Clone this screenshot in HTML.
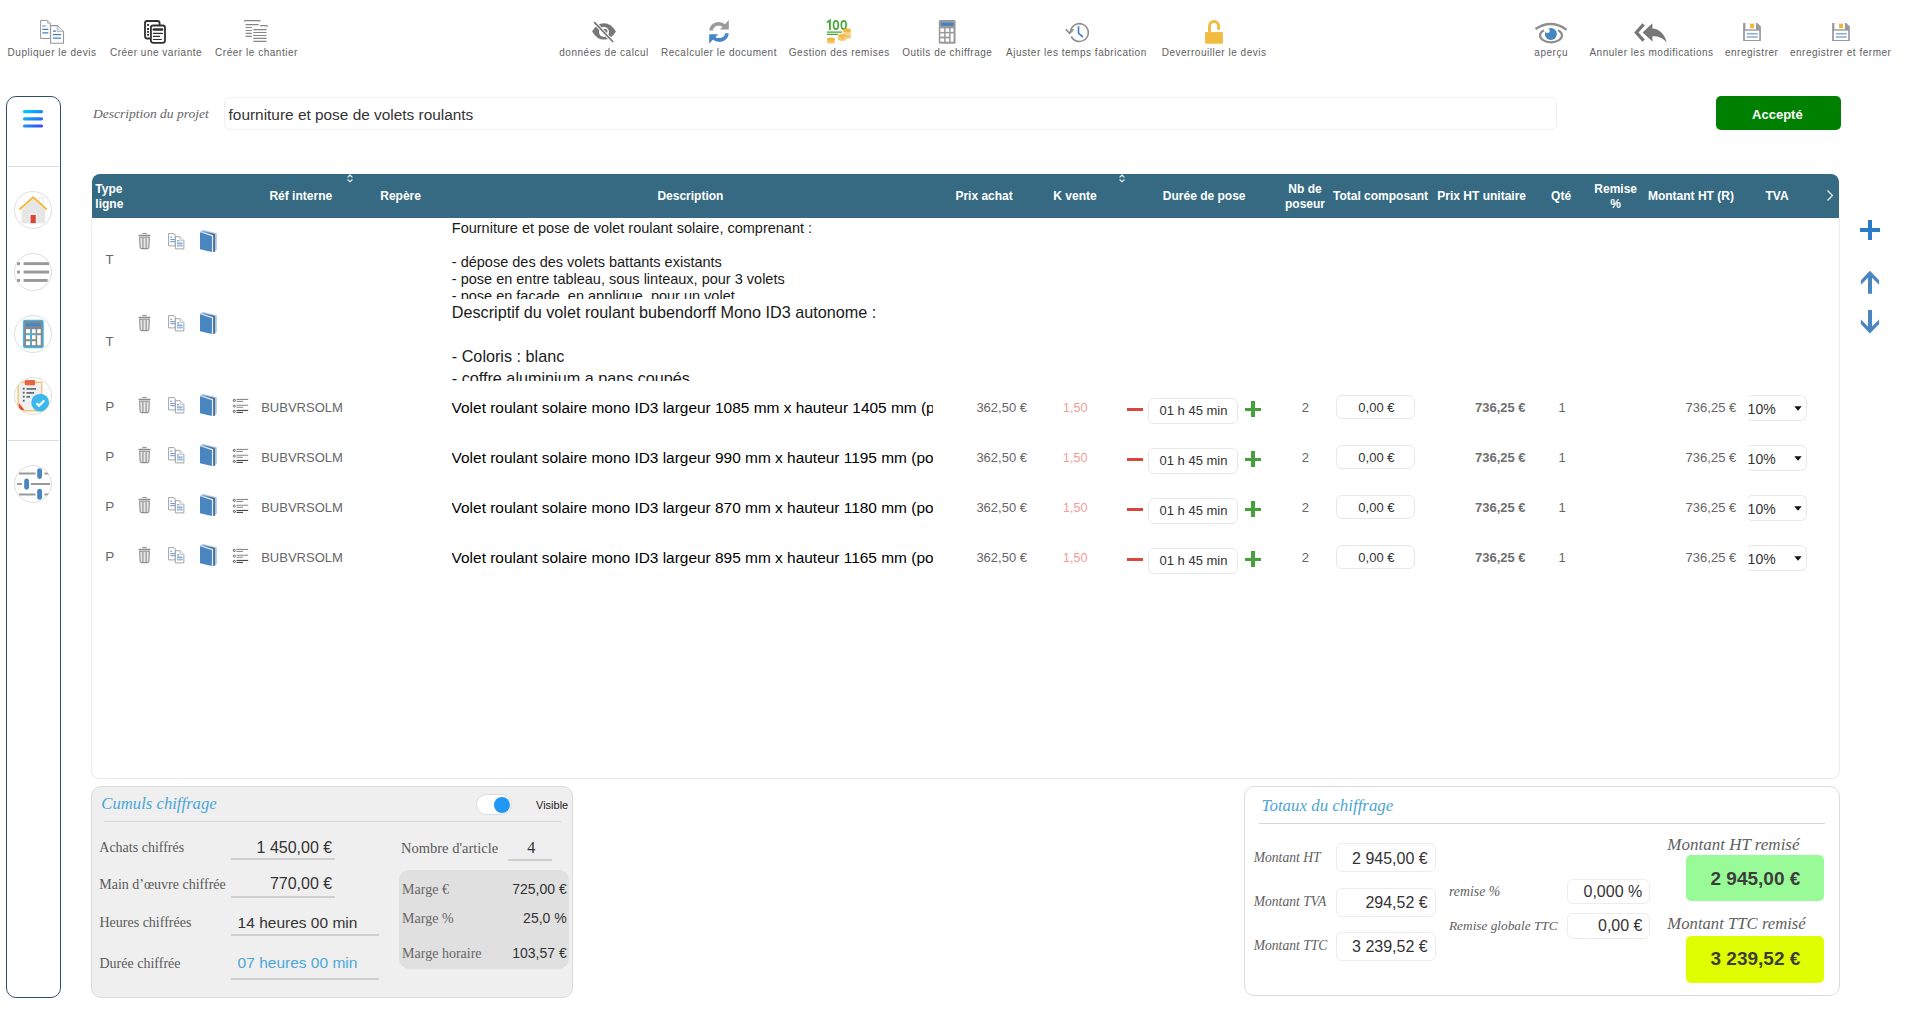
<!DOCTYPE html>
<html><head><meta charset="utf-8"><style>
*{box-sizing:border-box;margin:0;padding:0}
html,body{width:1909px;height:1017px;overflow:hidden;background:#fff;font-family:"Liberation Sans",sans-serif;position:relative}
.a{position:absolute}
.nw{white-space:nowrap}
.lbl{position:absolute;top:45.5px;font-size:10px;letter-spacing:0.52px;color:#606060;white-space:nowrap;transform:translateX(-50%);line-height:13px}
#side{left:6px;top:96px;width:55.2px;height:902px;border:1.5px solid #2f5166;border-radius:10px}
.circ{position:absolute;left:14px;width:38px;height:38px;border-radius:50%;border:1px solid #dedede;background:#fff;overflow:hidden}
#thead{left:92px;top:174px;width:1747px;height:44px;background:#366a82;border-radius:8px 8px 0 0}
.th{position:absolute;color:#fff;font-weight:bold;font-size:12px;line-height:14.5px;white-space:nowrap;transform:translateX(-50%);text-align:center}
#tbody{left:91px;top:218px;width:1749px;height:561px;border:1px solid #ededed;border-top:none;border-radius:0 0 8px 8px}
.serif{font-family:"Liberation Serif",serif}
.box{position:absolute;border:1px solid #e8e8e8;border-radius:6px;background:#fff}
</style></head><body>
<span class="lbl" style="left:52px">Dupliquer le devis</span>
<span class="lbl" style="left:156px">Créer une variante</span>
<span class="lbl" style="left:256.5px">Créer le chantier</span>
<span class="lbl" style="left:604px">données de calcul</span>
<span class="lbl" style="left:719px">Recalculer le document</span>
<span class="lbl" style="left:839.3px">Gestion des remises</span>
<span class="lbl" style="left:947.3px">Outils de chiffrage</span>
<span class="lbl" style="left:1076.4px">Ajuster les temps fabrication</span>
<span class="lbl" style="left:1214.1px">Deverrouiller le devis</span>
<span class="lbl" style="left:1551.2px">aperçu</span>
<span class="lbl" style="left:1651.5px">Annuler les modifications</span>
<span class="lbl" style="left:1751.7px">enregistrer</span>
<span class="lbl" style="left:1840.7px">enregistrer et fermer</span>
<svg class="a" style="left:38px;top:18px" width="28" height="28" viewBox="38 18 28 28"><path d="M40.6 20.4H47.6L50.4 23.3V38.5H40.6Z" fill="#fff" stroke="#999" stroke-width="1"/><path d="M47.6 20.4V23.3H50.4" fill="#d8d8d8" stroke="#aaa" stroke-width="0.8"/><path d="M42.4 26H45.8M42.4 29.4H48.4M42.4 32.9H48.4" stroke="#3f80c4" stroke-width="1.1"/><path d="M50.6 25.6H57.2L63.5 31.6V43.3H50.6Z" fill="#fff" stroke="#999" stroke-width="1.1"/><path d="M57.2 25.6V31.6H63.5" fill="#e4e4e4" stroke="#aaa" stroke-width="0.8"/><path d="M53 31.1H55.9M53 34.6H61.1M53 38.1H61.1" stroke="#3f80c4" stroke-width="1.2"/></svg>
<svg class="a" style="left:142px;top:18px" width="26" height="28" viewBox="142 18 26 28"><rect x="145" y="21" width="14.6" height="17.5" rx="2.2" fill="#fff" stroke="#303030" stroke-width="1.8"/><path d="M148 24.8h0.1M148 29h0.1M148 31.9h0.1M148 34.9h0.1" stroke="#303030" stroke-width="1.8" stroke-linecap="square"/><rect x="150.9" y="25.5" width="14.1" height="17.3" rx="2.2" fill="#fff" stroke="#303030" stroke-width="1.8"/><path d="M153.8 29.6h8.3" stroke="#303030" stroke-width="2.5" stroke-linecap="round"/><path d="M153.4 33.4h9M153.4 36.4h6.2M153.4 39.5h8" stroke="#303030" stroke-width="1.2" stroke-linecap="round"/></svg>
<svg class="a" style="left:242px;top:18px" width="28" height="26" viewBox="242 18 28 26"><g stroke="#7a7a7a" stroke-width="1.2" fill="none" opacity="0.9"><path d="M244.3 21.5Q244.6 20.7 245.5 20.7H259.2Q260.2 20.7 260.4 21.4"/><path d="M245.6 24.6h13M245.6 27.5h6.2M245.6 30.5h6.2M245.6 33.4h6.2M245.6 36.4h6.2"/><path d="M260.2 25.7H266.2Q267.4 25.7 267.6 26.8"/><path d="M253.3 29.6h13.2M253.3 32.5h13.2M253.3 35.5h13.2M253.3 38.4h13.2M253.3 41.4h13.2"/></g></svg>
<svg class="a" style="left:588px;top:16px" width="32" height="30" viewBox="588 16 32 30"><path d="M592.1 31.4Q597 23.2 604 23.2Q611 23.2 615.9 31.4Q611 39.6 604 39.6Q597 39.6 592.1 31.4Z" fill="#777"/><circle cx="604" cy="32" r="5" fill="#fff"/><circle cx="604.8" cy="31.3" r="2.6" fill="#777"/><path d="M594.2 22.2L613.1 42" stroke="#fff" stroke-width="3.6"/><path d="M594.2 22.2L613.1 42" stroke="#777" stroke-width="1.8"/></svg>
<svg class="a" style="left:704px;top:16px" width="30" height="30" viewBox="704 16 30 30"><path d="M709.3 30.5C709.6 25.5 713.5 21.9 718.7 21.9C721.2 21.9 723.4 22.9 725 24.2L728.8 20.1V29.6H719.9L722.6 26.9C721.6 26.1 720.2 25.7 718.7 25.7C715.5 25.7 713.1 27.8 712.8 30.5Z" fill="#9a9a9a"/><path d="M728.7 33.3C728.4 38.3 724.5 41.9 719.3 41.9C716.8 41.9 714.6 40.9 713 39.6L709.2 43.7V34.2H718.1L715.4 36.9C716.4 37.7 717.8 38.1 719.3 38.1C722.5 38.1 724.9 36 725.2 33.3Z" fill="#4686c6"/></svg>
<svg class="a" style="left:822px;top:16px" width="34" height="30" viewBox="822 16 34 30"><g fill="none" stroke="#46a83a"><path d="M827 22.6L829.9 20.5V29.9" stroke-width="1.9"/><ellipse cx="835.9" cy="25" rx="2.35" ry="4.1" stroke-width="1.7"/><ellipse cx="843.7" cy="25" rx="2.35" ry="4.1" stroke-width="1.7"/><path d="M827 32.1H842M827 34.3H837.9" stroke-width="1.3"/></g><g><rect x="843.2" y="30.2" width="7.7" height="7" fill="#f6d48c"/><ellipse cx="847" cy="37" rx="3.85" ry="1.7" fill="#f3c667"/><ellipse cx="847" cy="30.2" rx="3.85" ry="2" fill="#f2b83f"/><rect x="838.2" y="35.8" width="7.7" height="3.6" fill="#f6d48c"/><ellipse cx="842" cy="39.2" rx="3.85" ry="1.6" fill="#f3c667"/><ellipse cx="842" cy="35.8" rx="3.85" ry="1.8" fill="#f2b83f"/><rect x="827" y="39.3" width="8" height="2.8" fill="#f6d48c"/><ellipse cx="831" cy="42" rx="4" ry="1.6" fill="#f3c667"/><ellipse cx="831" cy="39.3" rx="4" ry="1.8" fill="#f2b83f"/></g></svg>
<svg class="a" style="left:932px;top:16px" width="30" height="30" viewBox="932 16 30 30"><rect x="938.8" y="20.1" width="16.8" height="23.6" rx="1.5" fill="#9a9a9a"/><rect x="940.8" y="22.8" width="12.7" height="2.9" rx="0.8" fill="#3f80c6"/><g fill="#fff"><rect x="940.3" y="28.4" width="3.8" height="3.5"/><rect x="945.6" y="28.4" width="3.5" height="3.5"/><rect x="950.6" y="28.4" width="2.9" height="3.5"/><rect x="940.3" y="33.4" width="3.8" height="3.2"/><rect x="945.6" y="33.4" width="3.5" height="3.2"/><rect x="950.6" y="33.4" width="2.9" height="8.3"/><rect x="940.3" y="38.4" width="3.8" height="3.3"/><rect x="945.6" y="38.4" width="3.5" height="3.3"/></g></svg>
<svg class="a" style="left:1062px;top:16px" width="30" height="30" viewBox="1062 16 30 30"><path d="M1070.5 32.5A8.9 8.9 0 1 1 1071.3 36.3" fill="none" stroke="#8c8c8c" stroke-width="1.6"/><path d="M1065.8 29.3L1069.6 33.3L1073.5 29.3" fill="none" stroke="#8c8c8c" stroke-width="1.6"/><path d="M1078.5 26.3V33.1L1082.9 37.2" fill="none" stroke="#3a7ec0" stroke-width="1.6"/></svg>
<svg class="a" style="left:1198px;top:16px" width="32" height="30" viewBox="1198 16 32 30"><path d="M1209.5 32.5V26A4.55 4.55 0 0 1 1218.6 26V29.7" fill="none" stroke="#f0bb3e" stroke-width="2.9"/><rect x="1205.1" y="32.1" width="17.8" height="11.6" fill="#f0bb3e"/></svg>
<svg class="a" style="left:1532px;top:18px" width="38" height="30" viewBox="1532 18 38 30"><path d="M1535.5 29Q1551 18.6 1566.5 29.7" fill="none" stroke="#8f8f8f" stroke-width="2.4"/><path d="M1543.9 30.3A11 6.8 0 1 0 1558.1 30.3" fill="none" stroke="#8f8f8f" stroke-width="2.2"/><circle cx="1550.9" cy="33.9" r="6" fill="#4787c0"/><circle cx="1547.4" cy="30.8" r="2.3" fill="#fff"/></svg>
<svg class="a" style="left:1632px;top:18px" width="38" height="30" viewBox="1632 18 38 30"><path d="M1643.6 24.4L1636.4 32.5L1643.6 40.6" fill="none" stroke="#777" stroke-width="3.3"/><path d="M1642.6 32.5L1652.4 23.3V28.6C1659 28.9 1664.5 33.5 1666.8 42.5C1663 38 1658.5 36.2 1652.4 36.3V41.5Z" fill="#777"/></svg>
<svg class="a" style="left:1738px;top:18px" width="28" height="28" viewBox="1738 18 28 28"><path d="M1743.1 23.1H1757.3L1760.9 26.4V40.9H1743.1Z" fill="#9a9a9a"/><rect x="1745.4" y="23.1" width="10.5" height="6.2" fill="#fff"/><rect x="1750.1" y="23.8" width="3.9" height="4.4" fill="#f0b73a"/><rect x="1744.9" y="30.7" width="14.3" height="9.3" fill="#fff"/><path d="M1746.8 33.7H1757.8M1746.8 37H1757.8" stroke="#85acd3" stroke-width="1.4"/></svg>
<svg class="a" style="left:1826.9px;top:18px" width="28" height="28" viewBox="1826.9 18 28 28"><path d="M1832.0 23.1H1846.2L1849.8000000000002 26.4V40.9H1832.0Z" fill="#9a9a9a"/><rect x="1834.3000000000002" y="23.1" width="10.5" height="6.2" fill="#fff"/><rect x="1839.0" y="23.8" width="3.9" height="4.4" fill="#f0b73a"/><rect x="1833.8000000000002" y="30.7" width="14.3" height="9.3" fill="#fff"/><path d="M1835.7 33.7H1846.7M1835.7 37H1846.7" stroke="#85acd3" stroke-width="1.4"/></svg>
<div id="side" class="a"></div>
<svg class="a" style="left:22px;top:109px" width="23" height="20" viewBox="0 0 23 20"><defs><linearGradient id="hg" x1="0" y1="0" x2="1" y2="1"><stop offset="0" stop-color="#00c8ff"/><stop offset="1" stop-color="#3a50f0"/></linearGradient></defs><path d="M2.5 2.6H19.5M2.5 9.8H19.5M2.5 17H19.5" stroke="url(#hg)" stroke-width="3.2" stroke-linecap="round"/></svg>
<div class="a" style="left:8px;top:166px;width:51px;height:1px;background:#dcdcdc"></div>
<div class="a" style="left:8px;top:440px;width:51px;height:1px;background:#dcdcdc"></div>
<div class="circ" style="top:191px"></div><svg class="a" style="left:14px;top:191px" width="38" height="38" viewBox="0 0 38 38"><defs><clipPath id="c210"><circle cx="19" cy="19" r="18.3"/></clipPath></defs><g clip-path="url(#c210)"><path d="M7.5 19V32.2H31V19L19.3 7.8Z" fill="#e6e6e6"/><rect x="24.8" y="7" width="4.5" height="5.8" fill="none" stroke="#e2e2e2" stroke-width="0.9"/><path d="M5.4 18.5L19.3 6.3L32.7 18.5" fill="none" stroke="#f3b93b" stroke-width="2"/><rect x="15.6" y="22.6" width="6.8" height="9.8" fill="#fff"/><rect x="16.5" y="23.9" width="5.3" height="8.3" fill="#d9473b"/></g></svg>
<div class="circ" style="top:253px"></div><svg class="a" style="left:14px;top:253px" width="38" height="38" viewBox="0 0 38 38"><defs><clipPath id="c272"><circle cx="19" cy="19" r="18.3"/></clipPath></defs><g clip-path="url(#c272)"><g fill="#999"><rect x="3" y="9.2" width="3" height="2.9"/><rect x="9.6" y="9.2" width="25.5" height="2.9"/><rect x="3" y="17.6" width="3" height="2.9"/><rect x="9.6" y="17.6" width="25.5" height="2.9"/><rect x="3" y="26" width="3" height="2.9"/><rect x="9.6" y="26" width="24" height="2.9"/></g></g></svg>
<div class="circ" style="top:315px"></div><svg class="a" style="left:14px;top:315px" width="38" height="38" viewBox="0 0 38 38"><defs><clipPath id="c334"><circle cx="19" cy="19" r="18.3"/></clipPath></defs><g clip-path="url(#c334)"><rect x="9.6" y="5.3" width="19.5" height="27.2" rx="1.6" fill="#888" stroke="#3cb8ea" stroke-width="1.3"/><rect x="12" y="8.3" width="14.5" height="3" rx="1" fill="#3d86d4"/><g fill="#fff"><rect x="12" y="14.2" width="4" height="4"/><rect x="18" y="14.2" width="3.6" height="4"/><rect x="23.2" y="14.2" width="3.5" height="4"/><rect x="12" y="20.2" width="4" height="4"/><rect x="18" y="20.2" width="3.6" height="4"/><rect x="23.2" y="20.2" width="3.5" height="10"/><rect x="12" y="26.2" width="4" height="4"/><rect x="18" y="26.2" width="3.6" height="4"/></g><path d="M16.9 14.2V30.2M12 19.2h11" stroke="#3cc8f0" stroke-width="1"/></g></svg>
<div class="circ" style="top:377px"></div><svg class="a" style="left:14px;top:377px" width="38" height="38" viewBox="0 0 38 38"><defs><clipPath id="c396"><circle cx="19" cy="19" r="18.3"/></clipPath></defs><g clip-path="url(#c396)"><rect x="3.4" y="4.5" width="25" height="30" fill="#f6c46f"/><rect x="4.8" y="6" width="22.3" height="27" fill="#efefef"/><rect x="10.8" y="3" width="10.3" height="5.3" rx="1.2" fill="#e8633f"/><path d="M4.8 26L10.5 33H4.8Z" fill="#e84a3a"/><g fill="#4e6670"><rect x="8.8" y="10.8" width="1.8" height="1.8"/><rect x="8.8" y="14.8" width="1.8" height="1.8"/><rect x="8.8" y="18.8" width="1.8" height="1.8"/><rect x="8.8" y="22.8" width="1.8" height="1.8"/><rect x="12.5" y="11.1" width="9.5" height="1.6"/><rect x="12.5" y="15.1" width="7.5" height="1.6"/><rect x="12.5" y="19.1" width="3.5" height="1.6"/></g><circle cx="26.2" cy="25.6" r="8.9" fill="#3cb8ec"/><path d="M22.5 26.2L25 28.6L30.3 23.5" fill="none" stroke="#fff" stroke-width="2.2"/></g></svg>
<div class="circ" style="top:465px"></div><svg class="a" style="left:14px;top:465px" width="38" height="38" viewBox="0 0 38 38"><defs><clipPath id="c484"><circle cx="19" cy="19" r="18.3"/></clipPath></defs><g clip-path="url(#c484)"><path d="M5 8.5H36M3 19.1H36M5 29.4H36" stroke="#999" stroke-width="2"/><g fill="#fff"><rect x="21.5" y="7" width="9" height="3"/><rect x="8" y="17.6" width="9" height="3"/><rect x="21.5" y="27.9" width="9" height="3"/></g><g fill="#4a86c0"><rect x="23.2" y="3.2" width="4.8" height="10.7" rx="2.4"/><rect x="10.2" y="13.5" width="4.8" height="11.2" rx="2.4"/><rect x="23.2" y="23.8" width="4.8" height="11" rx="2.4"/></g></g></svg>
<div class="a nw " style="left:93px;top:106.99px;font-size:13.5px;line-height:1;font-family:'Liberation Serif',serif;color:#666;font-style:italic;">Description du projet</div>
<div class="a" style="left:224px;top:97px;width:1333px;height:33px;border:1px solid #f0f0f0;border-radius:6px"></div>
<div class="a nw " style="left:228.6px;top:107.36px;font-size:15.4px;line-height:1;color:#333;">fourniture et pose de volets roulants</div>
<div class="a" style="left:1715.5px;top:95.5px;width:125px;height:34.6px;background:#008000;border-radius:5px"></div>
<div class="a nw " style="left:1777.4px;transform:translateX(-50%);top:107.70px;font-size:13px;line-height:1;color:#fff;font-weight:bold;">Accepté</div>
<div id="thead" class="a"></div>
<div id="tbody" class="a"></div>
<div class="a nw " style="left:95.3px;top:182.54px;font-size:12px;line-height:1;color:#fff;font-weight:bold;">Type</div>
<div class="a nw " style="left:95.3px;top:198.14px;font-size:12px;line-height:1;color:#fff;font-weight:bold;">ligne</div>
<div class="a nw " style="left:300.8px;transform:translateX(-50%);top:189.84px;font-size:12px;line-height:1;color:#fff;font-weight:bold;">Réf interne</div>
<div class="a nw " style="left:400.6px;transform:translateX(-50%);top:189.84px;font-size:12px;line-height:1;color:#fff;font-weight:bold;">Repère</div>
<div class="a nw " style="left:690.4px;transform:translateX(-50%);top:189.84px;font-size:12px;line-height:1;color:#fff;font-weight:bold;">Description</div>
<div class="a nw " style="left:984.1px;transform:translateX(-50%);top:189.84px;font-size:12px;line-height:1;color:#fff;font-weight:bold;">Prix achat</div>
<div class="a nw " style="left:1075px;transform:translateX(-50%);top:189.84px;font-size:12px;line-height:1;color:#fff;font-weight:bold;">K vente</div>
<div class="a nw " style="left:1204.2px;transform:translateX(-50%);top:189.84px;font-size:12px;line-height:1;color:#fff;font-weight:bold;">Durée de pose</div>
<div class="a nw " style="left:1380.5px;transform:translateX(-50%);top:189.84px;font-size:12px;line-height:1;color:#fff;font-weight:bold;">Total composant</div>
<div class="a nw " style="left:1481.7px;transform:translateX(-50%);top:189.84px;font-size:12px;line-height:1;color:#fff;font-weight:bold;">Prix HT unitaire</div>
<div class="a nw " style="left:1561.1px;transform:translateX(-50%);top:189.84px;font-size:12px;line-height:1;color:#fff;font-weight:bold;">Qté</div>
<div class="a nw " style="left:1690.9px;transform:translateX(-50%);top:189.84px;font-size:12px;line-height:1;color:#fff;font-weight:bold;">Montant HT (R)</div>
<div class="a nw " style="left:1777px;transform:translateX(-50%);top:189.84px;font-size:12px;line-height:1;color:#fff;font-weight:bold;">TVA</div>
<div class="a nw " style="left:1305px;transform:translateX(-50%);top:182.64px;font-size:12px;line-height:1;color:#fff;font-weight:bold;">Nb de</div>
<div class="a nw " style="left:1305px;transform:translateX(-50%);top:198.14px;font-size:12px;line-height:1;color:#fff;font-weight:bold;">poseur</div>
<div class="a nw " style="left:1615.7px;transform:translateX(-50%);top:182.64px;font-size:12px;line-height:1;color:#fff;font-weight:bold;">Remise</div>
<div class="a nw " style="left:1615.7px;transform:translateX(-50%);top:198.14px;font-size:12px;line-height:1;color:#fff;font-weight:bold;">%</div>
<svg class="a" style="left:346px;top:173px" width="8" height="11" viewBox="0 0 8 11"><path d="M1.6 4.4L4 2.1L6.4 4.4M1.6 6.5L4 8.8L6.4 6.5" fill="none" stroke="#fff" stroke-width="1.1"/></svg>
<svg class="a" style="left:1118px;top:173px" width="8" height="11" viewBox="0 0 8 11"><path d="M1.6 4.4L4 2.1L6.4 4.4M1.6 6.5L4 8.8L6.4 6.5" fill="none" stroke="#fff" stroke-width="1.1"/></svg>
<svg class="a" style="left:1826px;top:189px" width="8" height="13" viewBox="0 0 8 13"><path d="M1.5 1.5L6.5 6.5L1.5 11.5" fill="none" stroke="#fff" stroke-width="1.1"/></svg>
<div class="a nw " style="left:105.5px;top:252.54px;font-size:13.3px;line-height:1;color:#666;">T</div>
<svg class="a" style="left:137.8px;top:232px" width="14" height="18" viewBox="0 0 14 18"><path d="M4.3 1.5H8.7" stroke="#999" stroke-width="1.2"/><rect x="0.5" y="2.7" width="12" height="1.6" rx="0.5" fill="#8d8d8d"/><path d="M1.7 5.2H11.3L10.9 15.3Q10.8 16.6 9.5 16.6H3.5Q2.2 16.6 2.1 15.3Z" fill="#e8e8e8" stroke="#8d8d8d" stroke-width="1.1"/><path d="M4.9 6V16M8.1 6V16" stroke="#8d8d8d" stroke-width="1.1"/></svg>
<svg class="a" style="left:167.5px;top:232.5px" width="18" height="18" viewBox="0 0 18 18"><path d="M0.6 0.6H6.2L7.2 1.8V12.9H0.6Z" fill="#fff" stroke="#9a9a9a" stroke-width="0.9"/><path d="M2.3 4.2H4.3M2.3 6.6H6.6M2.3 8.7H6.6" stroke="#4b86c4" stroke-width="0.9"/><path d="M7.4 3.7H12.1L15.9 7.6V15.9H7.4Z" fill="#fff" stroke="#9a9a9a" stroke-width="0.9"/><path d="M12.1 3.7V7.6H15.9" fill="#eee" stroke="#bbb" stroke-width="0.8"/><path d="M9 7.9H11.2M9 10.1H14.6M9 12.5H14.6" stroke="#4b86c4" stroke-width="1"/><path d="M9 12.5H14.6" stroke="#9dbde0" stroke-width="2"/></svg>
<svg class="a" style="left:199px;top:229px" width="19" height="25" viewBox="0 0 19 25"><path d="M1.2 2.6L4 0.9L17.8 4.2V20.5L15.9 22.7Z" fill="#a9c8e6"/><path d="M3.2 1.9L16 5.1V22.7L14.1 23.1V6.3Z" fill="#4e6d8a"/><path d="M1.5 2.9L14.1 6.3V22.9L13 23V7.1L1.5 3.7Z" fill="#e3edf7"/><path d="M1 3.2L12.9 7.2V23L1 20.3Z" fill="#4986c0"/></svg>
<div class="a nw " style="left:105.5px;top:334.54px;font-size:13.3px;line-height:1;color:#666;">T</div>
<svg class="a" style="left:137.8px;top:314px" width="14" height="18" viewBox="0 0 14 18"><path d="M4.3 1.5H8.7" stroke="#999" stroke-width="1.2"/><rect x="0.5" y="2.7" width="12" height="1.6" rx="0.5" fill="#8d8d8d"/><path d="M1.7 5.2H11.3L10.9 15.3Q10.8 16.6 9.5 16.6H3.5Q2.2 16.6 2.1 15.3Z" fill="#e8e8e8" stroke="#8d8d8d" stroke-width="1.1"/><path d="M4.9 6V16M8.1 6V16" stroke="#8d8d8d" stroke-width="1.1"/></svg>
<svg class="a" style="left:167.5px;top:314.5px" width="18" height="18" viewBox="0 0 18 18"><path d="M0.6 0.6H6.2L7.2 1.8V12.9H0.6Z" fill="#fff" stroke="#9a9a9a" stroke-width="0.9"/><path d="M2.3 4.2H4.3M2.3 6.6H6.6M2.3 8.7H6.6" stroke="#4b86c4" stroke-width="0.9"/><path d="M7.4 3.7H12.1L15.9 7.6V15.9H7.4Z" fill="#fff" stroke="#9a9a9a" stroke-width="0.9"/><path d="M12.1 3.7V7.6H15.9" fill="#eee" stroke="#bbb" stroke-width="0.8"/><path d="M9 7.9H11.2M9 10.1H14.6M9 12.5H14.6" stroke="#4b86c4" stroke-width="1"/><path d="M9 12.5H14.6" stroke="#9dbde0" stroke-width="2"/></svg>
<svg class="a" style="left:199px;top:311px" width="19" height="25" viewBox="0 0 19 25"><path d="M1.2 2.6L4 0.9L17.8 4.2V20.5L15.9 22.7Z" fill="#a9c8e6"/><path d="M3.2 1.9L16 5.1V22.7L14.1 23.1V6.3Z" fill="#4e6d8a"/><path d="M1.5 2.9L14.1 6.3V22.9L13 23V7.1L1.5 3.7Z" fill="#e3edf7"/><path d="M1 3.2L12.9 7.2V23L1 20.3Z" fill="#4986c0"/></svg>
<div class="a nw" style="left:451.8px;top:220px;width:480px;height:79px;overflow:hidden;font-size:14.5px;line-height:17px;color:#1a1a1a">Fourniture et pose de volet roulant solaire, comprenant :<br><br>- dépose des des volets battants existants<br>- pose en entre tableau, sous linteaux, pour 3 volets<br>- pose en facade, en applique, pour un volet<br>- fourniture</div>
<div class="a nw" style="left:451.8px;top:300.9px;width:480px;height:80px;overflow:hidden;font-size:16.2px;line-height:22px;color:#1a1a1a">Descriptif du volet roulant bubendorff Mono ID3 autonome :<br><br>- Coloris : blanc<br>- coffre aluminium a pans coupés<br>- lames</div>
<div class="a nw " style="left:105.2px;top:400.37px;font-size:13.5px;line-height:1;color:#666;">P</div>
<svg class="a" style="left:137.8px;top:396px" width="14" height="18" viewBox="0 0 14 18"><path d="M4.3 1.5H8.7" stroke="#999" stroke-width="1.2"/><rect x="0.5" y="2.7" width="12" height="1.6" rx="0.5" fill="#8d8d8d"/><path d="M1.7 5.2H11.3L10.9 15.3Q10.8 16.6 9.5 16.6H3.5Q2.2 16.6 2.1 15.3Z" fill="#e8e8e8" stroke="#8d8d8d" stroke-width="1.1"/><path d="M4.9 6V16M8.1 6V16" stroke="#8d8d8d" stroke-width="1.1"/></svg>
<svg class="a" style="left:167.5px;top:396.5px" width="18" height="18" viewBox="0 0 18 18"><path d="M0.6 0.6H6.2L7.2 1.8V12.9H0.6Z" fill="#fff" stroke="#9a9a9a" stroke-width="0.9"/><path d="M2.3 4.2H4.3M2.3 6.6H6.6M2.3 8.7H6.6" stroke="#4b86c4" stroke-width="0.9"/><path d="M7.4 3.7H12.1L15.9 7.6V15.9H7.4Z" fill="#fff" stroke="#9a9a9a" stroke-width="0.9"/><path d="M12.1 3.7V7.6H15.9" fill="#eee" stroke="#bbb" stroke-width="0.8"/><path d="M9 7.9H11.2M9 10.1H14.6M9 12.5H14.6" stroke="#4b86c4" stroke-width="1"/><path d="M9 12.5H14.6" stroke="#9dbde0" stroke-width="2"/></svg>
<svg class="a" style="left:199px;top:393px" width="19" height="25" viewBox="0 0 19 25"><path d="M1.2 2.6L4 0.9L17.8 4.2V20.5L15.9 22.7Z" fill="#a9c8e6"/><path d="M3.2 1.9L16 5.1V22.7L14.1 23.1V6.3Z" fill="#4e6d8a"/><path d="M1.5 2.9L14.1 6.3V22.9L13 23V7.1L1.5 3.7Z" fill="#e3edf7"/><path d="M1 3.2L12.9 7.2V23L1 20.3Z" fill="#4986c0"/></svg>
<svg class="a" style="left:231.5px;top:398px" width="18" height="16" viewBox="0 0 18 16"><circle cx="2.3" cy="2.4" r="1.05" fill="#fff" stroke="#333" stroke-width="0.8"/><circle cx="2.3" cy="8.1" r="1.05" fill="#fff" stroke="#555" stroke-width="0.8"/><circle cx="2.3" cy="13.4" r="1.05" fill="#fff" stroke="#333" stroke-width="0.8"/><path d="M4.5 1.4H16.2M4.5 3.4H11" stroke="#777" stroke-width="0.95"/><path d="M4.5 7.3H16.2M4.5 9.3H11" stroke="#888" stroke-width="1.1"/><path d="M4.5 12.4H16.2M4.5 14.4H11" stroke="#2b2b2b" stroke-width="0.95"/></svg>
<div class="a nw " style="left:261.2px;top:400.80px;font-size:13px;line-height:1;color:#666;">BUBVRSOLM</div>
<div class="a nw" style="left:451.6px;top:399.82px;width:481.7px;overflow:hidden;font-size:15.45px;line-height:1;height:18px;color:#000">Volet roulant solaire mono ID3 largeur 1085 mm x hauteur 1405 mm (pose</div>
<div class="a nw " style="right:882px;top:400.80px;font-size:13px;line-height:1;color:#666;">362,50 €</div>
<div class="a nw " style="right:821.5999999999999px;top:401.62px;font-size:12.5px;line-height:1;color:#f49a9a;">1,50</div>
<div class="a" style="left:1126.8px;top:407.8px;width:16px;height:3px;background:#d9473b"></div>
<div class="box" style="left:1147.7px;top:397.5px;width:90.5px;height:26px"></div>
<div class="a nw " style="left:1159.5px;top:404.10px;font-size:13px;line-height:1;color:#333;">01 h 45 min</div>
<div class="a" style="left:1245px;top:407.6px;width:16px;height:3.2px;background:#46a03c"></div>
<div class="a" style="left:1251.4px;top:401.4px;width:3.2px;height:15.4px;background:#46a03c"></div>
<div class="a nw " style="left:1301.8px;top:401.00px;font-size:13px;line-height:1;color:#666;">2</div>
<div class="box" style="left:1335.8px;top:394.7px;width:79.6px;height:24.6px"></div>
<div class="a nw " style="left:1376.4px;transform:translateX(-50%);top:401.00px;font-size:13px;line-height:1;color:#333;">0,00 €</div>
<div class="a nw " style="right:383.4000000000001px;top:401.00px;font-size:13px;line-height:1;color:#707070;font-weight:bold;">736,25 €</div>
<div class="a nw " style="left:1558.4px;top:401.00px;font-size:13px;line-height:1;color:#666;">1</div>
<div class="a nw " style="right:172.79999999999995px;top:400.80px;font-size:13px;line-height:1;color:#666;">736,25 €</div>
<div class="box" style="left:1746px;top:395.2px;width:61px;height:26.2px;border-left-color:#fff"></div>
<div class="a nw " style="left:1747.6px;top:401.95px;font-size:14px;line-height:1;color:#333;">10%</div>
<svg class="a" style="left:1793.5px;top:405.5px" width="8" height="5" viewBox="0 0 8 5"><path d="M0.3 0.3H7.7L4 4.8Z" fill="#111"/></svg>
<div class="a nw " style="left:105.2px;top:450.37px;font-size:13.5px;line-height:1;color:#666;">P</div>
<svg class="a" style="left:137.8px;top:446px" width="14" height="18" viewBox="0 0 14 18"><path d="M4.3 1.5H8.7" stroke="#999" stroke-width="1.2"/><rect x="0.5" y="2.7" width="12" height="1.6" rx="0.5" fill="#8d8d8d"/><path d="M1.7 5.2H11.3L10.9 15.3Q10.8 16.6 9.5 16.6H3.5Q2.2 16.6 2.1 15.3Z" fill="#e8e8e8" stroke="#8d8d8d" stroke-width="1.1"/><path d="M4.9 6V16M8.1 6V16" stroke="#8d8d8d" stroke-width="1.1"/></svg>
<svg class="a" style="left:167.5px;top:446.5px" width="18" height="18" viewBox="0 0 18 18"><path d="M0.6 0.6H6.2L7.2 1.8V12.9H0.6Z" fill="#fff" stroke="#9a9a9a" stroke-width="0.9"/><path d="M2.3 4.2H4.3M2.3 6.6H6.6M2.3 8.7H6.6" stroke="#4b86c4" stroke-width="0.9"/><path d="M7.4 3.7H12.1L15.9 7.6V15.9H7.4Z" fill="#fff" stroke="#9a9a9a" stroke-width="0.9"/><path d="M12.1 3.7V7.6H15.9" fill="#eee" stroke="#bbb" stroke-width="0.8"/><path d="M9 7.9H11.2M9 10.1H14.6M9 12.5H14.6" stroke="#4b86c4" stroke-width="1"/><path d="M9 12.5H14.6" stroke="#9dbde0" stroke-width="2"/></svg>
<svg class="a" style="left:199px;top:443px" width="19" height="25" viewBox="0 0 19 25"><path d="M1.2 2.6L4 0.9L17.8 4.2V20.5L15.9 22.7Z" fill="#a9c8e6"/><path d="M3.2 1.9L16 5.1V22.7L14.1 23.1V6.3Z" fill="#4e6d8a"/><path d="M1.5 2.9L14.1 6.3V22.9L13 23V7.1L1.5 3.7Z" fill="#e3edf7"/><path d="M1 3.2L12.9 7.2V23L1 20.3Z" fill="#4986c0"/></svg>
<svg class="a" style="left:231.5px;top:448px" width="18" height="16" viewBox="0 0 18 16"><circle cx="2.3" cy="2.4" r="1.05" fill="#fff" stroke="#333" stroke-width="0.8"/><circle cx="2.3" cy="8.1" r="1.05" fill="#fff" stroke="#555" stroke-width="0.8"/><circle cx="2.3" cy="13.4" r="1.05" fill="#fff" stroke="#333" stroke-width="0.8"/><path d="M4.5 1.4H16.2M4.5 3.4H11" stroke="#777" stroke-width="0.95"/><path d="M4.5 7.3H16.2M4.5 9.3H11" stroke="#888" stroke-width="1.1"/><path d="M4.5 12.4H16.2M4.5 14.4H11" stroke="#2b2b2b" stroke-width="0.95"/></svg>
<div class="a nw " style="left:261.2px;top:450.80px;font-size:13px;line-height:1;color:#666;">BUBVRSOLM</div>
<div class="a nw" style="left:451.6px;top:449.82px;width:481.7px;overflow:hidden;font-size:15.45px;line-height:1;height:18px;color:#000">Volet roulant solaire mono ID3 largeur 990 mm x hauteur 1195 mm (pose</div>
<div class="a nw " style="right:882px;top:450.80px;font-size:13px;line-height:1;color:#666;">362,50 €</div>
<div class="a nw " style="right:821.5999999999999px;top:451.62px;font-size:12.5px;line-height:1;color:#f49a9a;">1,50</div>
<div class="a" style="left:1126.8px;top:457.8px;width:16px;height:3px;background:#d9473b"></div>
<div class="box" style="left:1147.7px;top:447.5px;width:90.5px;height:26px"></div>
<div class="a nw " style="left:1159.5px;top:454.10px;font-size:13px;line-height:1;color:#333;">01 h 45 min</div>
<div class="a" style="left:1245px;top:457.6px;width:16px;height:3.2px;background:#46a03c"></div>
<div class="a" style="left:1251.4px;top:451.4px;width:3.2px;height:15.4px;background:#46a03c"></div>
<div class="a nw " style="left:1301.8px;top:451.00px;font-size:13px;line-height:1;color:#666;">2</div>
<div class="box" style="left:1335.8px;top:444.7px;width:79.6px;height:24.6px"></div>
<div class="a nw " style="left:1376.4px;transform:translateX(-50%);top:451.00px;font-size:13px;line-height:1;color:#333;">0,00 €</div>
<div class="a nw " style="right:383.4000000000001px;top:451.00px;font-size:13px;line-height:1;color:#707070;font-weight:bold;">736,25 €</div>
<div class="a nw " style="left:1558.4px;top:451.00px;font-size:13px;line-height:1;color:#666;">1</div>
<div class="a nw " style="right:172.79999999999995px;top:450.80px;font-size:13px;line-height:1;color:#666;">736,25 €</div>
<div class="box" style="left:1746px;top:445.2px;width:61px;height:26.2px;border-left-color:#fff"></div>
<div class="a nw " style="left:1747.6px;top:451.95px;font-size:14px;line-height:1;color:#333;">10%</div>
<svg class="a" style="left:1793.5px;top:455.5px" width="8" height="5" viewBox="0 0 8 5"><path d="M0.3 0.3H7.7L4 4.8Z" fill="#111"/></svg>
<div class="a nw " style="left:105.2px;top:500.37px;font-size:13.5px;line-height:1;color:#666;">P</div>
<svg class="a" style="left:137.8px;top:496px" width="14" height="18" viewBox="0 0 14 18"><path d="M4.3 1.5H8.7" stroke="#999" stroke-width="1.2"/><rect x="0.5" y="2.7" width="12" height="1.6" rx="0.5" fill="#8d8d8d"/><path d="M1.7 5.2H11.3L10.9 15.3Q10.8 16.6 9.5 16.6H3.5Q2.2 16.6 2.1 15.3Z" fill="#e8e8e8" stroke="#8d8d8d" stroke-width="1.1"/><path d="M4.9 6V16M8.1 6V16" stroke="#8d8d8d" stroke-width="1.1"/></svg>
<svg class="a" style="left:167.5px;top:496.5px" width="18" height="18" viewBox="0 0 18 18"><path d="M0.6 0.6H6.2L7.2 1.8V12.9H0.6Z" fill="#fff" stroke="#9a9a9a" stroke-width="0.9"/><path d="M2.3 4.2H4.3M2.3 6.6H6.6M2.3 8.7H6.6" stroke="#4b86c4" stroke-width="0.9"/><path d="M7.4 3.7H12.1L15.9 7.6V15.9H7.4Z" fill="#fff" stroke="#9a9a9a" stroke-width="0.9"/><path d="M12.1 3.7V7.6H15.9" fill="#eee" stroke="#bbb" stroke-width="0.8"/><path d="M9 7.9H11.2M9 10.1H14.6M9 12.5H14.6" stroke="#4b86c4" stroke-width="1"/><path d="M9 12.5H14.6" stroke="#9dbde0" stroke-width="2"/></svg>
<svg class="a" style="left:199px;top:493px" width="19" height="25" viewBox="0 0 19 25"><path d="M1.2 2.6L4 0.9L17.8 4.2V20.5L15.9 22.7Z" fill="#a9c8e6"/><path d="M3.2 1.9L16 5.1V22.7L14.1 23.1V6.3Z" fill="#4e6d8a"/><path d="M1.5 2.9L14.1 6.3V22.9L13 23V7.1L1.5 3.7Z" fill="#e3edf7"/><path d="M1 3.2L12.9 7.2V23L1 20.3Z" fill="#4986c0"/></svg>
<svg class="a" style="left:231.5px;top:498px" width="18" height="16" viewBox="0 0 18 16"><circle cx="2.3" cy="2.4" r="1.05" fill="#fff" stroke="#333" stroke-width="0.8"/><circle cx="2.3" cy="8.1" r="1.05" fill="#fff" stroke="#555" stroke-width="0.8"/><circle cx="2.3" cy="13.4" r="1.05" fill="#fff" stroke="#333" stroke-width="0.8"/><path d="M4.5 1.4H16.2M4.5 3.4H11" stroke="#777" stroke-width="0.95"/><path d="M4.5 7.3H16.2M4.5 9.3H11" stroke="#888" stroke-width="1.1"/><path d="M4.5 12.4H16.2M4.5 14.4H11" stroke="#2b2b2b" stroke-width="0.95"/></svg>
<div class="a nw " style="left:261.2px;top:500.80px;font-size:13px;line-height:1;color:#666;">BUBVRSOLM</div>
<div class="a nw" style="left:451.6px;top:499.82px;width:481.7px;overflow:hidden;font-size:15.45px;line-height:1;height:18px;color:#000">Volet roulant solaire mono ID3 largeur 870 mm x hauteur 1180 mm (pose</div>
<div class="a nw " style="right:882px;top:500.80px;font-size:13px;line-height:1;color:#666;">362,50 €</div>
<div class="a nw " style="right:821.5999999999999px;top:501.62px;font-size:12.5px;line-height:1;color:#f49a9a;">1,50</div>
<div class="a" style="left:1126.8px;top:507.8px;width:16px;height:3px;background:#d9473b"></div>
<div class="box" style="left:1147.7px;top:497.5px;width:90.5px;height:26px"></div>
<div class="a nw " style="left:1159.5px;top:504.10px;font-size:13px;line-height:1;color:#333;">01 h 45 min</div>
<div class="a" style="left:1245px;top:507.6px;width:16px;height:3.2px;background:#46a03c"></div>
<div class="a" style="left:1251.4px;top:501.4px;width:3.2px;height:15.4px;background:#46a03c"></div>
<div class="a nw " style="left:1301.8px;top:501.00px;font-size:13px;line-height:1;color:#666;">2</div>
<div class="box" style="left:1335.8px;top:494.7px;width:79.6px;height:24.6px"></div>
<div class="a nw " style="left:1376.4px;transform:translateX(-50%);top:501.00px;font-size:13px;line-height:1;color:#333;">0,00 €</div>
<div class="a nw " style="right:383.4000000000001px;top:501.00px;font-size:13px;line-height:1;color:#707070;font-weight:bold;">736,25 €</div>
<div class="a nw " style="left:1558.4px;top:501.00px;font-size:13px;line-height:1;color:#666;">1</div>
<div class="a nw " style="right:172.79999999999995px;top:500.80px;font-size:13px;line-height:1;color:#666;">736,25 €</div>
<div class="box" style="left:1746px;top:495.2px;width:61px;height:26.2px;border-left-color:#fff"></div>
<div class="a nw " style="left:1747.6px;top:501.95px;font-size:14px;line-height:1;color:#333;">10%</div>
<svg class="a" style="left:1793.5px;top:505.5px" width="8" height="5" viewBox="0 0 8 5"><path d="M0.3 0.3H7.7L4 4.8Z" fill="#111"/></svg>
<div class="a nw " style="left:105.2px;top:550.37px;font-size:13.5px;line-height:1;color:#666;">P</div>
<svg class="a" style="left:137.8px;top:546px" width="14" height="18" viewBox="0 0 14 18"><path d="M4.3 1.5H8.7" stroke="#999" stroke-width="1.2"/><rect x="0.5" y="2.7" width="12" height="1.6" rx="0.5" fill="#8d8d8d"/><path d="M1.7 5.2H11.3L10.9 15.3Q10.8 16.6 9.5 16.6H3.5Q2.2 16.6 2.1 15.3Z" fill="#e8e8e8" stroke="#8d8d8d" stroke-width="1.1"/><path d="M4.9 6V16M8.1 6V16" stroke="#8d8d8d" stroke-width="1.1"/></svg>
<svg class="a" style="left:167.5px;top:546.5px" width="18" height="18" viewBox="0 0 18 18"><path d="M0.6 0.6H6.2L7.2 1.8V12.9H0.6Z" fill="#fff" stroke="#9a9a9a" stroke-width="0.9"/><path d="M2.3 4.2H4.3M2.3 6.6H6.6M2.3 8.7H6.6" stroke="#4b86c4" stroke-width="0.9"/><path d="M7.4 3.7H12.1L15.9 7.6V15.9H7.4Z" fill="#fff" stroke="#9a9a9a" stroke-width="0.9"/><path d="M12.1 3.7V7.6H15.9" fill="#eee" stroke="#bbb" stroke-width="0.8"/><path d="M9 7.9H11.2M9 10.1H14.6M9 12.5H14.6" stroke="#4b86c4" stroke-width="1"/><path d="M9 12.5H14.6" stroke="#9dbde0" stroke-width="2"/></svg>
<svg class="a" style="left:199px;top:543px" width="19" height="25" viewBox="0 0 19 25"><path d="M1.2 2.6L4 0.9L17.8 4.2V20.5L15.9 22.7Z" fill="#a9c8e6"/><path d="M3.2 1.9L16 5.1V22.7L14.1 23.1V6.3Z" fill="#4e6d8a"/><path d="M1.5 2.9L14.1 6.3V22.9L13 23V7.1L1.5 3.7Z" fill="#e3edf7"/><path d="M1 3.2L12.9 7.2V23L1 20.3Z" fill="#4986c0"/></svg>
<svg class="a" style="left:231.5px;top:548px" width="18" height="16" viewBox="0 0 18 16"><circle cx="2.3" cy="2.4" r="1.05" fill="#fff" stroke="#333" stroke-width="0.8"/><circle cx="2.3" cy="8.1" r="1.05" fill="#fff" stroke="#555" stroke-width="0.8"/><circle cx="2.3" cy="13.4" r="1.05" fill="#fff" stroke="#333" stroke-width="0.8"/><path d="M4.5 1.4H16.2M4.5 3.4H11" stroke="#777" stroke-width="0.95"/><path d="M4.5 7.3H16.2M4.5 9.3H11" stroke="#888" stroke-width="1.1"/><path d="M4.5 12.4H16.2M4.5 14.4H11" stroke="#2b2b2b" stroke-width="0.95"/></svg>
<div class="a nw " style="left:261.2px;top:550.80px;font-size:13px;line-height:1;color:#666;">BUBVRSOLM</div>
<div class="a nw" style="left:451.6px;top:549.82px;width:481.7px;overflow:hidden;font-size:15.45px;line-height:1;height:18px;color:#000">Volet roulant solaire mono ID3 largeur 895 mm x hauteur 1165 mm (pose</div>
<div class="a nw " style="right:882px;top:550.80px;font-size:13px;line-height:1;color:#666;">362,50 €</div>
<div class="a nw " style="right:821.5999999999999px;top:551.62px;font-size:12.5px;line-height:1;color:#f49a9a;">1,50</div>
<div class="a" style="left:1126.8px;top:557.8px;width:16px;height:3px;background:#d9473b"></div>
<div class="box" style="left:1147.7px;top:547.5px;width:90.5px;height:26px"></div>
<div class="a nw " style="left:1159.5px;top:554.10px;font-size:13px;line-height:1;color:#333;">01 h 45 min</div>
<div class="a" style="left:1245px;top:557.6px;width:16px;height:3.2px;background:#46a03c"></div>
<div class="a" style="left:1251.4px;top:551.4px;width:3.2px;height:15.4px;background:#46a03c"></div>
<div class="a nw " style="left:1301.8px;top:551.00px;font-size:13px;line-height:1;color:#666;">2</div>
<div class="box" style="left:1335.8px;top:544.7px;width:79.6px;height:24.6px"></div>
<div class="a nw " style="left:1376.4px;transform:translateX(-50%);top:551.00px;font-size:13px;line-height:1;color:#333;">0,00 €</div>
<div class="a nw " style="right:383.4000000000001px;top:551.00px;font-size:13px;line-height:1;color:#707070;font-weight:bold;">736,25 €</div>
<div class="a nw " style="left:1558.4px;top:551.00px;font-size:13px;line-height:1;color:#666;">1</div>
<div class="a nw " style="right:172.79999999999995px;top:550.80px;font-size:13px;line-height:1;color:#666;">736,25 €</div>
<div class="box" style="left:1746px;top:545.2px;width:61px;height:26.2px;border-left-color:#fff"></div>
<div class="a nw " style="left:1747.6px;top:551.95px;font-size:14px;line-height:1;color:#333;">10%</div>
<svg class="a" style="left:1793.5px;top:555.5px" width="8" height="5" viewBox="0 0 8 5"><path d="M0.3 0.3H7.7L4 4.8Z" fill="#111"/></svg>
<div class="a" style="left:1860.2px;top:227.8px;width:19.7px;height:4px;background:#2b7bcb"></div>
<div class="a" style="left:1868px;top:219.9px;width:4px;height:19.9px;background:#2b7bcb"></div>
<svg class="a" style="left:1860px;top:270px" width="20" height="25" viewBox="0 0 20 25"><path d="M9.9 0.8L19.1 10.2V14.8L12 7.7V23.7H8V7.7L0.9 14.8V10.2Z" fill="#4a86c0"/></svg>
<svg class="a" style="left:1860px;top:309px" width="20" height="25" viewBox="0 0 20 25"><path d="M9.9 24.5L19.1 15.1V10.5L12 17.6V0.9H8V17.6L0.9 10.5V15.1Z" fill="#4a86c0"/></svg>
<div class="a" style="left:91px;top:786px;width:482px;height:212px;background:#efefef;border:1px solid #dcdcdc;border-radius:10px"></div>
<div class="a nw " style="left:101.3px;top:795.81px;font-size:16.7px;line-height:1;font-family:'Liberation Serif',serif;color:#4aa5d5;font-style:italic;">Cumuls chiffrage</div>
<div class="a" style="left:475.6px;top:794.4px;width:36.3px;height:21px;background:#fff;border:1px solid #dcdcdc;border-radius:11px"></div>
<div class="a" style="left:494px;top:797px;width:16px;height:16px;background:#2196f3;border-radius:50%"></div>
<div class="a nw " style="left:536px;top:799.59px;font-size:11px;line-height:1;color:#222;">Visible</div>
<div class="a" style="left:104px;top:821px;width:457px;height:1px;background:#d6d6d6"></div>
<div class="a nw " style="left:99.3px;top:841.27px;font-size:14px;line-height:1;font-family:'Liberation Serif',serif;color:#5a5a5a;">Achats chiffrés</div>
<div class="a nw " style="right:1576.8px;top:839.76px;font-size:16px;line-height:1;color:#333;">1 450,00 €</div>
<div class="a" style="left:231px;top:858px;width:104px;height:2.2px;background:#cfcfcf"></div>
<div class="a nw " style="left:99.3px;top:877.98px;font-size:14px;line-height:1;font-family:'Liberation Serif',serif;color:#5a5a5a;">Main d’œuvre chiffrée</div>
<div class="a nw " style="right:1576.8px;top:875.86px;font-size:16px;line-height:1;color:#333;">770,00 €</div>
<div class="a" style="left:231px;top:896px;width:104px;height:2.2px;background:#cfcfcf"></div>
<div class="a nw " style="left:99.5px;top:915.98px;font-size:14px;line-height:1;font-family:'Liberation Serif',serif;color:#5a5a5a;">Heures chiffrées</div>
<div class="a nw " style="left:237.6px;top:914.58px;font-size:15.5px;line-height:1;color:#333;">14 heures 00 min</div>
<div class="a" style="left:231px;top:934px;width:148px;height:2.2px;background:#cfcfcf"></div>
<div class="a nw " style="left:99.5px;top:956.88px;font-size:14px;line-height:1;font-family:'Liberation Serif',serif;color:#5a5a5a;">Durée chiffrée</div>
<div class="a nw " style="left:237.6px;top:955.28px;font-size:15.5px;line-height:1;color:#4aa8d8;">07 heures 00 min</div>
<div class="a" style="left:231px;top:978px;width:148px;height:2.2px;background:#cfcfcf"></div>
<div class="a nw " style="left:401px;top:841.46px;font-size:14.5px;line-height:1;font-family:'Liberation Serif',serif;color:#5a5a5a;">Nombre d'article</div>
<div class="a nw " style="left:531.3px;transform:translateX(-50%);top:840.40px;font-size:16px;line-height:1;font-family:'Liberation Serif',serif;color:#333;">4</div>
<div class="a" style="left:508px;top:859px;width:44px;height:2.2px;background:#cfcfcf"></div>
<div class="a" style="left:399.3px;top:870px;width:169.6px;height:99px;background:#e0e0e0;border-radius:10px"></div>
<div class="a nw " style="left:402.1px;top:883.17px;font-size:14px;line-height:1;font-family:'Liberation Serif',serif;color:#666;">Marge €</div>
<div class="a nw " style="right:1342.3px;top:882.35px;font-size:14px;line-height:1;color:#333;">725,00 €</div>
<div class="a nw " style="left:402.1px;top:911.98px;font-size:14px;line-height:1;font-family:'Liberation Serif',serif;color:#666;">Marge %</div>
<div class="a nw " style="right:1342.3px;top:911.05px;font-size:14px;line-height:1;color:#333;">25,0 %</div>
<div class="a nw " style="left:402.1px;top:946.88px;font-size:14px;line-height:1;font-family:'Liberation Serif',serif;color:#666;">Marge horaire</div>
<div class="a nw " style="right:1342.3px;top:945.95px;font-size:14px;line-height:1;color:#333;">103,57 €</div>
<div class="a" style="left:1244.3px;top:786.3px;width:595.8px;height:209.5px;background:#fff;border:1px solid #dcdcdc;border-radius:10px"></div>
<div class="a nw " style="left:1261.6px;top:797.95px;font-size:16.9px;line-height:1;font-family:'Liberation Serif',serif;color:#4aa5d5;font-style:italic;">Totaux du chiffrage</div>
<div class="a" style="left:1258.6px;top:823px;width:566.5px;height:1px;background:#d6d6d6"></div>
<div class="a nw " style="left:1253.7px;top:851.21px;font-size:13.6px;line-height:1;font-family:'Liberation Serif',serif;color:#606060;font-style:italic;">Montant HT</div>
<div class="box" style="left:1336.3px;top:843.3px;width:99.3px;height:29.1px;border-color:#ececec"></div>
<div class="a nw " style="right:481.29999999999995px;top:850.76px;font-size:16px;line-height:1;color:#333;">2 945,00 €</div>
<div class="a nw " style="left:1253.7px;top:895.41px;font-size:13.6px;line-height:1;font-family:'Liberation Serif',serif;color:#606060;font-style:italic;">Montant TVA</div>
<div class="box" style="left:1336.3px;top:887.5px;width:99.3px;height:29.1px;border-color:#ececec"></div>
<div class="a nw " style="right:481.29999999999995px;top:894.96px;font-size:16px;line-height:1;color:#333;">294,52 €</div>
<div class="a nw " style="left:1253.7px;top:939.11px;font-size:13.6px;line-height:1;font-family:'Liberation Serif',serif;color:#606060;font-style:italic;">Montant TTC</div>
<div class="box" style="left:1336.3px;top:931.8px;width:99.3px;height:29.1px;border-color:#ececec"></div>
<div class="a nw " style="right:481.29999999999995px;top:939.26px;font-size:16px;line-height:1;color:#333;">3 239,52 €</div>
<div class="a nw " style="left:1449px;top:885.24px;font-size:13.8px;line-height:1;font-family:'Liberation Serif',serif;color:#606060;font-style:italic;">remise %</div>
<div class="box" style="left:1566.6px;top:879.2px;width:83.7px;height:25.2px;border-color:#ececec"></div>
<div class="a nw " style="right:266.79999999999995px;top:883.96px;font-size:16px;line-height:1;color:#333;">0,000 %</div>
<div class="a nw " style="left:1449px;top:919.36px;font-size:13.3px;line-height:1;font-family:'Liberation Serif',serif;color:#606060;font-style:italic;">Remise globale TTC</div>
<div class="box" style="left:1566.6px;top:913.3px;width:83.7px;height:25.4px;border-color:#ececec"></div>
<div class="a nw " style="right:266.5px;top:918.06px;font-size:16px;line-height:1;color:#333;">0,00 €</div>
<div class="a nw " style="left:1667.3px;top:835.56px;font-size:17px;line-height:1;font-family:'Liberation Serif',serif;color:#606060;font-style:italic;">Montant HT remisé</div>
<div class="a" style="left:1686.3px;top:855.2px;width:137.7px;height:46.3px;background:#98fb98;border-radius:5px"></div>
<div class="a nw " style="right:108.70000000000005px;top:868.82px;font-size:19px;line-height:1;color:#3d3d3d;font-weight:bold;">2 945,00 €</div>
<div class="a nw " style="left:1667.3px;top:916.21px;font-size:16.7px;line-height:1;font-family:'Liberation Serif',serif;color:#606060;font-style:italic;">Montant TTC remisé</div>
<div class="a" style="left:1686.3px;top:936.1px;width:137.7px;height:46.7px;background:#dfff00;border-radius:5px"></div>
<div class="a nw " style="right:108.70000000000005px;top:949.42px;font-size:19px;line-height:1;color:#3d3d3d;font-weight:bold;">3 239,52 €</div>
</body></html>
